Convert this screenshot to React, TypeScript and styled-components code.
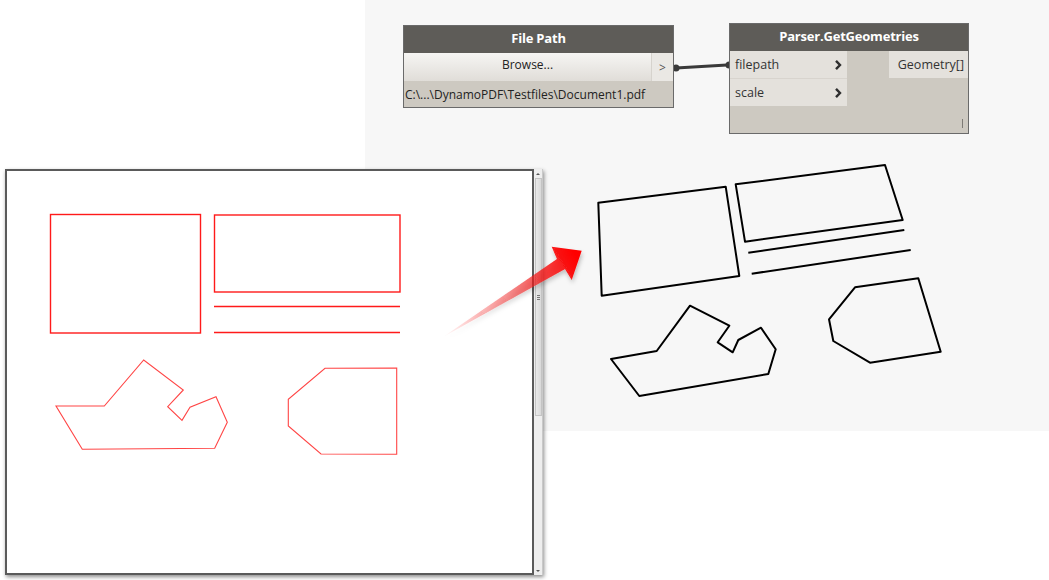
import React from "react";
import styled, { createGlobalStyle } from "styled-components";

const GlobalStyle = createGlobalStyle`
  html, body { margin: 0; padding: 0; background: #ffffff; }
  body { font-family: "Open Sans", "Noto Sans", sans-serif; }
`;

const Stage = styled.div`
  position: relative;
  width: 1049px;
  height: 580px;
  overflow: hidden;
  background: #ffffff;
  display: flex;
  justify-content: flex-end;
  align-items: flex-start;
`;

const Canvas = styled.div`
  position: relative;
  width: 684px;
  height: 431px;
  background: #f7f7f7;
`;

const Node = styled.div<{ $left: number; $top: number; $width: number }>`
  position: absolute;
  left: ${(p) => p.$left}px;
  top: ${(p) => p.$top}px;
  width: ${(p) => p.$width}px;
  border: 1px solid #6a6a6a;
  box-sizing: border-box;
  display: flex;
  flex-direction: column;
  background: #cdc9c1;
`;

const NodeHeader = styled.div`
  height: 27px;
  padding-bottom: 3px;
  box-sizing: border-box;
  background: #5e5c58;
  color: #ffffff;
  font-weight: 700;
  font-size: 13px;
  letter-spacing: -0.2px;
  display: flex;
  align-items: center;
  justify-content: center;
`;

const BrowseRow = styled.div`
  display: flex;
  height: 28px;
`;

const BrowseButton = styled.div`
  flex: 1;
  display: flex;
  align-items: center;
  justify-content: center;
  font-size: 12px;
  color: #222;
  padding-bottom: 6px;
  box-sizing: border-box;
  background: linear-gradient(#f6f5f3, #e0ddd8);
`;

const OutPort = styled.div`
  width: 21px;
  display: flex;
  align-items: center;
  justify-content: center;
  font-size: 12px;
  color: #555;
  background: #eae8e4;
  border-left: 1px solid #d6d3cd;
`;

const PathRow = styled.div`
  height: 26px;
  display: flex;
  align-items: center;
  padding-left: 1px;
  font-size: 12px;
  color: #222;
  background: #cdc9c1;
  white-space: nowrap;
`;

const ParserBody = styled.div`
  display: flex;
  justify-content: space-between;
  height: 82px;
  position: relative;
`;

const Inputs = styled.div`
  width: 117px;
  display: flex;
  flex-direction: column;
  gap: 1px;
  background: #d8d4ce;
  align-self: flex-start;
`;

const PortRow = styled.div`
  height: 27px;
  display: flex;
  align-items: center;
  justify-content: space-between;
  padding: 0 5px 0 5px;
  font-size: 12.5px;
  color: #333;
  background: #e4e1dc;
`;

const OutputCell = styled.div`
  width: 79px;
  height: 27px;
  display: flex;
  align-items: center;
  justify-content: flex-end;
  padding-right: 4px;
  box-sizing: border-box;
  font-size: 12.5px;
  color: #333;
  background: #e4e1dc;
`;

const Lacing = styled.div`
  position: absolute;
  right: 5px;
  bottom: 5px;
  width: 1px;
  height: 9px;
  background: #7d7a75;
`;

const Overlay = styled.svg`
  position: absolute;
  left: 0;
  top: 0;
  pointer-events: none;
`;

const Window = styled.div`
  position: absolute;
  left: 5px;
  top: 169px;
  width: 538px;
  height: 406px;
  display: flex;
  box-shadow: 1px 2px 4px rgba(0, 0, 0, 0.45);
  background: #f0f0f0;
`;

const Page = styled.div`
  flex: 1;
  background: #ffffff;
  border: 2px solid #5a5a5a;
  display: flex;
`;

const ScrollBar = styled.div`
  width: 9px;
  display: flex;
  flex-direction: column;
  align-items: center;
  background: #eeeeee;
  border-right: 1px solid #c9c9c9;
`;

const ScrollArrow = styled.div<{ $down?: boolean }>`
  width: 0;
  height: 0;
  margin: 4px 0 3px;
  border-left: 2px solid transparent;
  border-right: 2px solid transparent;
  ${(p) =>
    p.$down
      ? "border-top: 2px solid #555; margin-top: auto; margin-bottom: 3px;"
      : "border-bottom: 2px solid #555;"}
`;

const Thumb = styled.div`
  width: 7px;
  height: 238px;
  box-sizing: border-box;
  border: 1px solid #c4c4c4;
  background: linear-gradient(90deg, #e9e9e9, #d9d9d9);
  display: flex;
  align-items: center;
  justify-content: center;
`;

const Grip = styled.div`
  width: 3px;
  height: 5px;
  background: repeating-linear-gradient(#777 0 1px, transparent 1px 2px);
`;

const Chevron = () => (
  <svg width="8" height="12" viewBox="0 0 8 12">
    <path d="M2 1.8 L6 6 L2 10.2" fill="none" stroke="#2e2e2e" strokeWidth="2.4" />
  </svg>
);

const App: React.FC = () => (
  <>
    <GlobalStyle />
    <Stage>
      <Canvas>
        <svg width="684" height="431" viewBox="365 0 684 431" style={{ position: "absolute", left: 0, top: 0 }}>
          <g fill="none" stroke="#000" strokeWidth="2" strokeLinejoin="round">
            <polygon points="598.3,202.7 725.7,186.7 739.3,276 601.7,295.7" />
            <polygon points="735.7,184.3 885,165 902.7,220 745,241.7" />
            <line x1="748.3" y1="252.7" x2="904.3" y2="230" />
            <line x1="751.7" y1="273.7" x2="910.7" y2="250" />
            <polygon points="611,359 656.7,351 690,305.7 729.3,325.7 717.7,342.3 732.7,352.3 738.3,340 761,327.7 775.7,349.3 768.3,374 639.3,396" />
            <polygon points="855,287.3 918.3,278.3 940.7,351.7 870,362.7 833.3,341 829,319.3" />
          </g>
          <line x1="676" y1="68" x2="727" y2="65" stroke="#3a3a3a" strokeWidth="3.2" />
          <circle cx="676" cy="68" r="3.5" fill="#3a3a3a" />
          <circle cx="729" cy="65" r="3.5" fill="#3a3a3a" />
        </svg>
        <Node $left={38} $top={25} $width={271}>
          <NodeHeader>File Path</NodeHeader>
          <BrowseRow>
            <BrowseButton>Browse...</BrowseButton>
            <OutPort>&gt;</OutPort>
          </BrowseRow>
          <PathRow>C:\...\DynamoPDF\Testfiles\Document1.pdf</PathRow>
        </Node>
        <Node $left={364} $top={23} $width={240}>
          <NodeHeader>Parser.GetGeometries</NodeHeader>
          <ParserBody>
            <Inputs>
              <PortRow>
                filepath
                <Chevron />
              </PortRow>
              <PortRow>
                scale
                <Chevron />
              </PortRow>
            </Inputs>
            <OutputCell>Geometry[]</OutputCell>
            <Lacing />
          </ParserBody>
        </Node>
      </Canvas>
      <Window>
        <Page>
          <svg width="525" height="401" viewBox="7 171 525 401">
            <g fill="none" stroke="#ff1a1a" strokeWidth="1.4">
              <rect x="50.5" y="214.5" width="150" height="118.5" />
              <rect x="214.5" y="215" width="185.5" height="77" />
              <line x1="214" y1="306.5" x2="400" y2="306.5" />
              <line x1="214" y1="332.5" x2="400" y2="332.5" />
            </g>
            <g fill="none" stroke="#ff4545" strokeWidth="1.1">
              <polygon points="56,406 104.3,406 143.7,360 183.3,390 167.7,406.7 182,420.3 190,407.3 216,396.7 227.3,422.3 214.7,448.3 82.3,449.3" />
              <polygon points="325,368.3 396.7,368 396.7,454.3 321,454 288.3,426 288.3,399.3" />
            </g>
          </svg>
        </Page>
        <ScrollBar>
          <ScrollArrow />
          <Thumb>
            <Grip />
          </Thumb>
          <ScrollArrow $down />
        </ScrollBar>
      </Window>
      <Overlay width="1049" height="580" viewBox="0 0 1049 580">
        <defs>
          <linearGradient id="arrowGrad" gradientUnits="userSpaceOnUse" x1="443" y1="337" x2="575" y2="255">
            <stop offset="0" stopColor="#ff0000" stopOpacity="0" />
            <stop offset="0.55" stopColor="#ee2222" stopOpacity="0.55" />
            <stop offset="1" stopColor="#ff0000" stopOpacity="1" />
          </linearGradient>
          <filter id="arrowShadow" x="-20%" y="-20%" width="140%" height="140%">
            <feDropShadow dx="1" dy="3" stdDeviation="2" floodColor="#000" floodOpacity="0.25" />
          </filter>
        </defs>
        <polygon
          points="443,337 557,259 551.7,246.7 581.7,250.7 571.7,280 565,269"
          fill="url(#arrowGrad)"
          filter="url(#arrowShadow)"
        />
      </Overlay>
    </Stage>
  </>
);

export default App;
